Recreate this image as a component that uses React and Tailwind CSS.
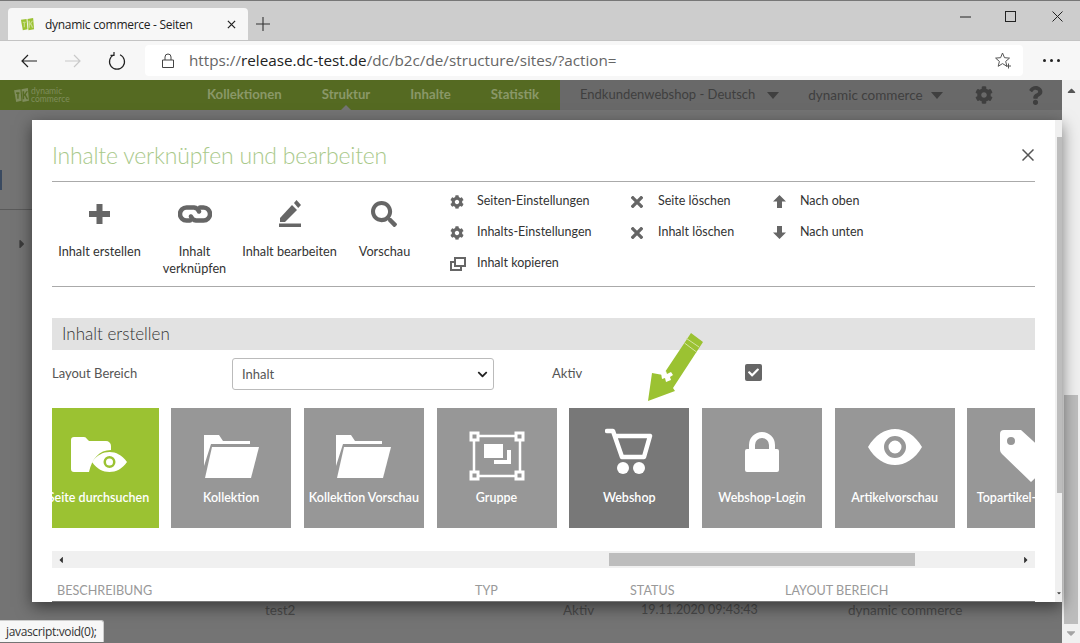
import React from "react";
import { FaCog, FaSearch, FaQuestion, FaCaretDown, FaCaretLeft, FaCaretRight, FaCaretUp, FaCheck, FaChevronDown } from "react-icons/fa";

const UI = "font-['Open_Sans','Liberation_Sans',sans-serif]";
const PAGE = "font-['Lato','Noto_Sans',sans-serif]";

function Logo({ className, a = "#9bc232", b = "#c8dc8a" }) {
  return (
    <svg viewBox="0 0 16 16" className={className}>
      <path d="M1 3l6-1 1 11-5 1z" fill={a} />
      <path d="M8 2l6-1 1 12-6 1z" fill={a} />
      <path d="M3 5h3v1.500H5.300V11H4V6.500H3zM9 4h1.500v3L12.500 4H14l-2 3 2.300 4.500h-1.600L11 8l-.5.700V11.500H9z" fill={b} />
    </svg>
  );
}

function FolderOpen() {
  return (
    <svg viewBox="0 0 55 43" className="w-[55px] h-[43px] mt-[27px]" fill="white">
      <path d="M0 0h15l4 6h27v3H7L0 31z" />
      <path d="M8 12h47l-8 31H1z" />
    </svg>
  );
}

function Tile({ label, active, hover, children }) {
  const bg = active ? "bg-[#9bc232]" : hover ? "bg-[#787878]" : "bg-[#979797]";
  return (
    <div className={`w-[120px] h-[120px] shrink-0 flex flex-col items-center ${bg}`}>
      <div className="h-[81px] w-full flex items-start justify-center">{children}</div>
      <div className="text-white text-[12.500px] font-semibold leading-[18px] whitespace-nowrap">{label}</div>
    </div>
  );
}

function BigAction({ children, icon }) {
  return (
    <div className="w-[95px] shrink-0 flex flex-col items-center pt-[17px]">
      <div className="h-[30px] flex items-center justify-center">{icon}</div>
      <div className="mt-[14px] text-[12.700px] leading-[17px] text-[#333] text-center whitespace-nowrap">{children}</div>
    </div>
  );
}

function SmallAction({ icon, label }) {
  return (
    <div className="h-[31px] flex items-center text-[12.500px] text-[#333] whitespace-nowrap">
      <span className="w-[28px] flex items-center text-[#666] pl-[1px]">{icon}</span>
      {label}
    </div>
  );
}

const BoldX = (
  <svg viewBox="0 0 13 13" className="w-[12px] h-[12px]"><path d="M2 2l9 9M11 2l-9 9" stroke="#666" strokeWidth="3.600" strokeLinecap="square" /></svg>
);
const ArrowUp = (
  <svg viewBox="0 0 13 13" className="w-[13px] h-[13px]" fill="#666"><path d="M6.500 0L13 6.500H9V13H4V6.500H0z" /></svg>
);
const ArrowDown = (
  <svg viewBox="0 0 13 13" className="w-[13px] h-[13px]" fill="#666"><path d="M6.500 13L13 6.500H9V0H4V6.500H0z" /></svg>
);

function Triangle() {
  return <span className="w-0 h-0 border-x-[6px] border-x-transparent border-t-[7px] border-t-[#3f3f3f]" />;
}

export default function App() {
  return (
    <div className={`relative w-[1080px] h-[643px] overflow-hidden bg-[#cdcdcd] flex flex-col border-t border-[#777] ${UI}`}>
      {/* title bar */}
      <div className="h-[40px] shrink-0 flex items-end pl-[8px] border-b border-[#c4c4c4]">
        <div className="w-[240px] h-[32px] bg-[#f7f7f7] rounded-t-[4px] flex items-center pl-[12px] pr-[10px] pt-[1px]">
          <Logo className="w-[15px] h-[15px]" />
          <span className="ml-[10px] text-[12px] tracking-[-0.28px] text-[#222] flex-1 whitespace-nowrap">dynamic commerce - Seiten</span>
          <svg viewBox="0 0 10 10" className="w-[9px] h-[9px] mr-[2px]"><path d="M1 1l8 8M9 1l-8 8" stroke="#222" strokeWidth="1.400" /></svg>
        </div>
        <svg viewBox="0 0 14 14" className="w-[14px] h-[14px] ml-[8px] mb-[9px]"><path d="M7 0v14M0 7h14" stroke="#333" strokeWidth="1.100" /></svg>
        <div className="ml-auto self-start flex items-center h-[30px] pr-[17px]">
          <svg viewBox="0 0 11 11" className="w-[11px] h-[11px]"><path d="M0 6h11" stroke="#222" /></svg>
          <svg viewBox="0 0 11 11" className="w-[11px] h-[11px] ml-[34px]"><rect x=".5" y=".5" width="10" height="10" fill="none" stroke="#222" /></svg>
          <svg viewBox="0 0 11 11" className="w-[11px] h-[11px] ml-[36px]"><path d="M.5.500l10 10M10.500.500l-10 10" stroke="#222" /></svg>
        </div>
      </div>
      {/* toolbar */}
      <div className="h-[39px] shrink-0 bg-[#f7f7f7] flex items-center pl-[21px]">
        <svg viewBox="0 0 16 14" className="w-[16px] h-[14px]"><path d="M16 7H1M7 1L1 7l6 6" fill="none" stroke="#222" strokeWidth="1.200" /></svg>
        <svg viewBox="0 0 16 14" className="w-[16px] h-[14px] ml-[28px]"><path d="M0 7h15M9 1l6 6-6 6" fill="none" stroke="#c9c9c9" strokeWidth="1.200" /></svg>
        <svg viewBox="0 0 18 18" className="w-[18px] h-[18px] ml-[27px]"><path d="M6 2.800A7.500 7.500 0 1 0 12 2.800M6 0v3.300H2.500" fill="none" stroke="#222" strokeWidth="1.200" /></svg>
        <div className="ml-[19px] w-[878px] h-[31px] bg-white rounded-[4px] flex items-center pl-[17px] pr-[11px]">
          <svg viewBox="0 0 12 15" className="w-[12px] h-[15px]"><path d="M3 7V4a3 3 0 0 1 6 0v3M.5 7h11v7.500H.5z" fill="none" stroke="#444" /></svg>
          <span className="ml-[15px] text-[15.250px] text-[#666] whitespace-nowrap flex-1"><span>https://</span><span className="text-[#222]">release.dc-test.de</span>/dc/b2c/de/structure/sites/?action=</span>
          <svg viewBox="0 0 17 17" className="w-[17px] h-[17px]"><path d="M7.500 1l2 4.700 5 .4-3.800 3.300 1.200 4.900-4.400-2.700-4.300 2.700 1.200-4.900L.6 6.100l5-.4z" fill="none" stroke="#555" /><path d="M13.500 11.500v5M11 14h5" stroke="#555" /></svg>
        </div>
        <div className="ml-[20px] flex gap-[4px]">
          <span className="w-[3px] h-[3px] rounded-full bg-[#222]" /><span className="w-[3px] h-[3px] rounded-full bg-[#222]" /><span className="w-[3px] h-[3px] rounded-full bg-[#222]" />
        </div>
      </div>

      {/* page */}
      <div className="flex-1 min-h-0 flex">
        <div className={`w-[1062px] shrink-0 flex flex-col bg-[#747474] ${PAGE}`}>
          <div className="relative h-[30px] shrink-0 flex bg-[#556a22]">
            <div className="w-[207px] flex items-center pl-[13px] shrink-0">
              <Logo className="w-[17px] h-[17px]" a="#7f8d5c" b="#556a22" />
              <div className="ml-[1px] text-[8.500px] leading-[8px] text-[#7f8d5c]">dynamic<br />commerce</div>
            </div>
            <div className="flex-1 flex items-center gap-[40px] text-[13.200px] font-bold text-[#8a9868] whitespace-nowrap">
              <span>Kollektionen</span><span>Struktur</span><span>Inhalte</span><span>Statistik</span>
            </div>
            <div className="w-[502px] shrink-0 bg-[#696969] flex items-center pl-[20px] text-[#3f3f3f] whitespace-nowrap">
              <span className="text-[13px]">Endkundenwebshop - Deutsch</span>
              <span className="ml-[12px] flex"><Triangle /></span>
              <span className="ml-[29px] text-[13.500px]">dynamic commerce</span>
              <span className="ml-[8px] flex"><Triangle /></span>
              <FaCog className="ml-[32px] text-[18px]" />
              <FaQuestion className="ml-[33px] text-[19px]" />
            </div>
            <span className="absolute left-[341px] bottom-0 w-0 h-0 border-x-[5px] border-x-transparent border-b-[5px] border-b-[#747474]" />
          </div>
          <div className="flex-1 relative">
            <div className="absolute left-0 top-[60px] w-[2px] h-[20px] bg-[#3a4a60]" />
            <div className="absolute left-0 top-[99px] w-[32px] h-px bg-[#5a5a5a]" />
            <FaCaretRight className="absolute left-[15px] top-[127px] text-[14px] text-[#3b3b3b]" />
            <div className="mt-[490px] flex items-center text-[13.500px] text-[#4a4a4a] whitespace-nowrap">
              <span className="ml-[265px] w-[298px]">test2</span>
              <span className="w-[78px]">Aktiv</span>
              <span className="w-[207px] text-[12.500px]">19.11.2020 09:43:43</span>
              <span>dynamic commerce</span>
            </div>
          </div>
        </div>
        {/* page scrollbar */}
        <div className="w-[18px] shrink-0 bg-[#f0f0f0] flex flex-col items-center relative">
          <FaCaretUp className="mt-[4px] text-[13px] text-[#555] h-[13px]" />
          <div className="mt-[298px] w-[14px] h-[229px] bg-[#bdbdbd]" />
          <FaCaretDown className="mt-[2px] text-[14px] text-[#a3a3a3]" />
        </div>
      </div>

      {/* modal */}
      <div className={`absolute left-[32px] top-[119px] w-[1030px] h-[482px] bg-white flex shadow-[0_5px_15px_rgba(0,0,0,0.5)] ${PAGE}`}>
        <div className="w-[1023px] shrink-0 pl-[20px] pr-[20px] overflow-hidden">
          <div className="h-[62px] border-b border-[#aaa] flex items-center justify-between pt-[9px]">
            <span className="text-[23px] tracking-[-0.2px] font-light text-[#a9c98a] whitespace-nowrap">Inhalte verknüpfen und bearbeiten</span>
            <svg viewBox="0 0 12 12" className="w-[12px] h-[12px] mr-[1px]"><path d="M.5.500l11 11M11.500.500l-11 11" stroke="#555" strokeWidth="1.500" /></svg>
          </div>
          <div className="h-[105px] border-b border-[#aaa] flex">
            <BigAction icon={
              <svg viewBox="0 0 21 20" className="w-[21px] h-[20px]" fill="#666"><path d="M7.500 0h6v7H21v6h-7.500v7h-6v-7H0V7h7.500z" /></svg>
            }>Inhalt erstellen</BigAction>
            <BigAction icon={
              <svg viewBox="0 0 34 18" className="w-[34px] h-[18px]" fill="none" stroke="#666" strokeWidth="4.500" strokeLinecap="round">
                <path d="M12 15.500H8.500a6.300 6.300 0 0 1 0-13H16a6 6 0 0 1 5 4" />
                <path d="M22 2.500h3.500a6.300 6.300 0 0 1 0 13H18a6 6 0 0 1-5-4" />
              </svg>
            }>Inhalt<br />verknüpfen</BigAction>
            <BigAction icon={
              <svg viewBox="0 0 22 28" className="w-[22px] h-[28px]" fill="#666">
                <path d="M1 18L13 5l5 5L6 22H1z" /><path d="M15 3l2.500-3 4.500 5-2.800 3z" /><path d="M0 23.500h22V27H0z" />
              </svg>
            }>Inhalt bearbeiten</BigAction>
            <BigAction icon={<FaSearch className="text-[26px] text-[#666] ml-[-2px]" />}>Vorschau</BigAction>
            <div className="ml-[17px] pt-[4px] w-[181px]">
              <SmallAction icon={<FaCog className="text-[14px]" />} label="Seiten-Einstellungen" />
              <SmallAction icon={<FaCog className="text-[14px]" />} label="Inhalts-Einstellungen" />
              <SmallAction icon={
                <svg viewBox="0 0 16 14" className="w-[16px] h-[14px]" fill="none" stroke="#666" strokeWidth="2"><path d="M5 1h10v8H5z" /><path d="M5 5H1v8h10V9" /></svg>
              } label="Inhalt kopieren" />
            </div>
            <div className="pt-[4px] w-[142px]">
              <SmallAction icon={BoldX} label="Seite löschen" />
              <SmallAction icon={BoldX} label="Inhalt löschen" />
            </div>
            <div className="pt-[4px]">
              <SmallAction icon={ArrowUp} label="Nach oben" />
              <SmallAction icon={ArrowDown} label="Nach unten" />
            </div>
          </div>
          <div className="mt-[31px] h-[32px] bg-[#e2e2e2] pl-[10px] flex items-center text-[17px] font-light text-[#333]">Inhalt erstellen</div>
          <div className="mt-[8px] h-[32px] flex items-center text-[13px] text-[#555]">
            <span className="w-[180px]">Layout Bereich</span>
            <div className="w-[262px] h-[32px] rounded-[3px] border border-[#bbb] flex items-center pl-[9px] pr-[5px] pt-[1px] justify-between text-[#555]">
              <span>Inhalt</span>
              <FaChevronDown className="text-[11px] text-[#222]" />
            </div>
            <span className="ml-[58px] w-[193px]">Aktiv</span>
            <span className="w-[17px] h-[17px] rounded-[2px] bg-[#666] flex items-center justify-center mb-[4px]">
              <FaCheck className="text-[11px] text-white" />
            </span>
          </div>
          <div className="mt-[18px] h-[120px] overflow-hidden">
            <div className="flex gap-[12.700px] ml-[-13.500px]">
              <Tile label="Seite durchsuchen" active>
                <svg viewBox="0 0 56 35" className="w-[56px] h-[35px] mt-[29px]" fill="white">
                  <path d="M0 3a3 3 0 0 1 3-3h10a4 4 0 0 1 3 2l2 2h17a5 5 0 0 1 5 5v4C28 13 21 22 18 35H3a3 3 0 0 1-3-3z" />
                  <path fillRule="evenodd" d="M21 25C26 18 32 15 38.500 15S51 18 56 25C51 32 45 35 38.500 35S26 32 21 25zM38.500 19a6 6 0 1 0 0 12 6 6 0 0 0 0-12zM38.500 21.500a3.500 3.500 0 1 1 0 7 3.500 3.500 0 0 1 0-7z" />
                </svg>
              </Tile>
              <Tile label="Kollektion"><FolderOpen /></Tile>
              <Tile label="Kollektion Vorschau"><FolderOpen /></Tile>
              <Tile label="Gruppe">
                <svg viewBox="0 0 56 50" className="w-[56px] h-[50px] mt-[23px]" fill="none" stroke="white">
                  <path d="M5 5h46v40H5z" strokeWidth="2.500" />
                  <path d="M2 2h7v7H2zM47 2h7v7h-7zM2 41h7v7H2zM47 41h7v7h-7z" strokeWidth="3" fill="#979797" />
                  <path d="M15 13h19v14H15z" fill="white" stroke="none" />
                  <path d="M25 31h15V19" strokeWidth="4" />
                </svg>
              </Tile>
              <Tile label="Webshop" hover>
                <svg viewBox="0 0 48 47" className="w-[48px] h-[47px] mt-[20px]" fill="none" stroke="white">
                  <path d="M2 3h6l9 26h22l6-21H11" strokeWidth="4.500" strokeLinecap="round" strokeLinejoin="round" />
                  <circle cx="18" cy="40" r="6" fill="white" stroke="none" />
                  <circle cx="34" cy="40" r="6" fill="white" stroke="none" />
                </svg>
              </Tile>
              <Tile label="Webshop-Login">
                <svg viewBox="0 0 34 42" className="w-[34px] h-[42px] mt-[22px]" fill="white"><path fillRule="evenodd" d="M4 19v-4a13 13 0 0 1 26 0v4h2a2 2 0 0 1 2 2v19a2 2 0 0 1-2 2H2a2 2 0 0 1-2-2V21a2 2 0 0 1 2-2zm6 0h14v-4a7 7 0 0 0-14 0z" /></svg>
              </Tile>
              <Tile label="Artikelvorschau">
                <svg viewBox="0 0 54 36" className="w-[54px] h-[36px] mt-[21px]" fill="white"><path fillRule="evenodd" d="M0 18C7 6 17 0 27 0s20 6 27 18c-7 12-17 18-27 18S7 30 0 18zm27-11a11 11 0 1 0 0 22 11 11 0 0 0 0-22zm0 4.500a6.500 6.500 0 1 1 0 13 6.500 6.500 0 0 1 0-13z" /></svg>
              </Tile>
              <Tile label="Topartikel-Ansicht">
                <svg viewBox="0 0 54 52" className="w-[54px] h-[52px] mt-[22px]" fill="white"><path fillRule="evenodd" d="M4 0H21L54 30 31 52 2 24Q0 22 0 20V4Q0 0 4 0zM11 7a4 4 0 1 0 0 8 4 4 0 0 0 0-8z" /></svg>
              </Tile>
            </div>
          </div>
          <div className="mt-[23px] h-[17px] bg-[#f0f0f0] flex items-center relative">
            <FaCaretLeft className="ml-[4px] text-[10px] text-[#333]" />
            <div className="ml-[543px] w-[306px] h-[13px] bg-[#bdbdbd]" />
            <FaCaretRight className="absolute right-[4px] text-[10px] text-[#333]" />
          </div>
          <div className="mt-[14px] flex pl-[5px] text-[12.600px] text-[#999] whitespace-nowrap border-b border-[#777] h-[20px]">
            <span className="w-[418px]">BESCHREIBUNG</span>
            <span className="w-[155px]">TYP</span>
            <span className="w-[155px]">STATUS</span>
            <span>LAYOUT BEREICH</span>
          </div>
        </div>
        {/* modal scrollbar */}
        <div className="w-[7px] shrink-0 bg-[#f0f0f0] flex flex-col items-end">
          <div className="h-[17px] w-full" />
          <div className="w-[5px] h-[356px] bg-[#bdbdbd]" />
          <FaCaretDown className="mt-auto mb-[6px] text-[6px] text-[#444]" />
        </div>
      </div>

      {/* green arrow annotation */}
      <svg viewBox="0 0 60 72" className="absolute left-[647px] top-[331px] w-[60px] h-[72px]">
        <path d="M1 69L5 41 16 43 44 1 56 10 26 56 28 59z" fill="#9bc232" />
        <path d="M39.500 6.500L52 15M37.500 11L49.500 20" stroke="#d4e4a4" strokeWidth="1" />
        <path d="M14 41l5-2 1 3 4-2 2 3-3 2 1 3-5 2-1-4-3 1z" fill="white" />
      </svg>

      {/* status tooltip */}
      <div className="absolute left-0 bottom-[1px] w-[104px] h-[22px] bg-[#f7f7f7] rounded-tr-[3px] border-t border-r border-[#ccc] flex items-center pl-[6px] text-[12px] tracking-[-0.35px] text-[#333] whitespace-nowrap">javascript:void(0);</div>
    </div>
  );
}
